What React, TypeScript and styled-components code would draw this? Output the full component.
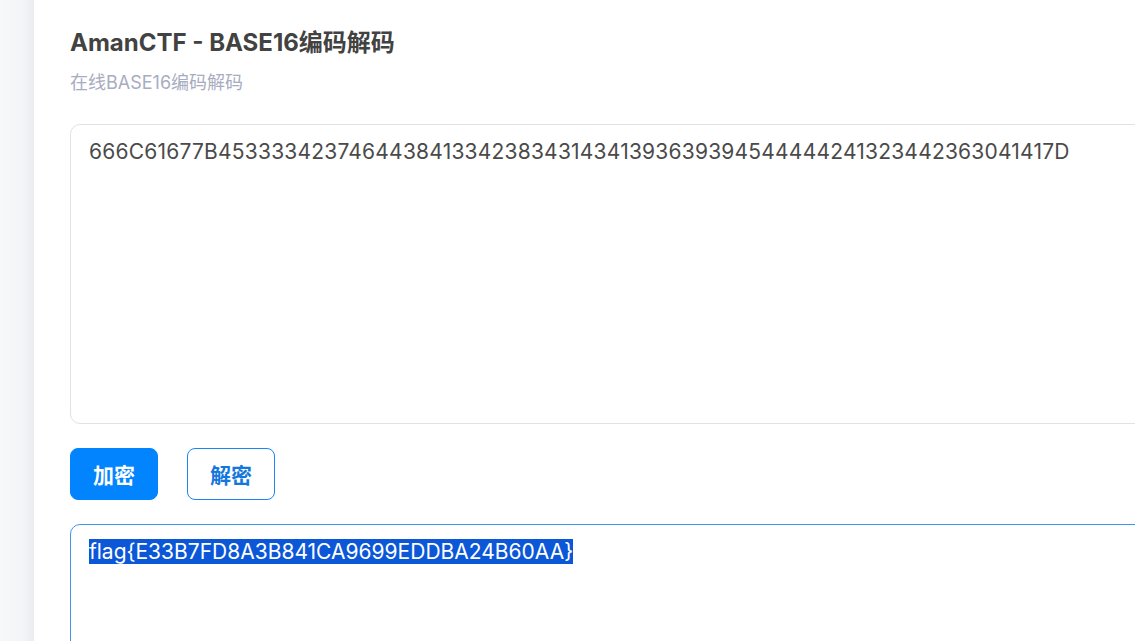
import React from "react";
import styled, { createGlobalStyle } from "styled-components";

const GlobalStyle = createGlobalStyle`
  html, body {
    margin: 0;
    padding: 0;
    height: 100%;
    overflow: hidden;
    background: #ffffff;
  }
  #root {
    height: 100%;
  }
  * {
    box-sizing: border-box;
  }
`;

const Page = styled.div`
  display: flex;
  height: 100%;
  font-family: Inter, "Noto Sans CJK SC", sans-serif;
`;

const Sidebar = styled.div`
  width: 34px;
  flex-shrink: 0;
  background: linear-gradient(to right, #f7f8fa 0%, #f3f4f7 70%, #eaecef 100%);
`;

const Card = styled.main`
  flex: 1;
  min-width: 0;
  background: #ffffff;
  padding: 28px 0 0 36px;
`;

const Title = styled.h1`
  margin: 0;
  font-size: 24px;
  line-height: 30px;
  font-weight: 700;
  color: #424242;
`;

const Subtitle = styled.p`
  margin: 13px 0 0;
  font-size: 18px;
  line-height: 24px;
  color: #a7adbf;
`;

const Box = styled.div<{ $focused?: boolean; $height: number }>`
  width: 1120px;
  height: ${(p) => p.$height}px;
  margin-top: ${(p) => (p.$focused ? 24 : 29)}px;
  border: 1px solid ${(p) => (p.$focused ? "#3d97ef" : "#e2e2e2")};
  border-radius: 10px;
  padding: 13px 18px;
  font-size: 21px;
  line-height: 27px;
  color: #4a4a4a;
  white-space: nowrap;
  letter-spacing: ${(p) => (p.$focused ? 0 : 0.21)}px;
`;

const Selected = styled.span`
  background: #0b57d8;
  color: #ffffff;
`;

const Actions = styled.div`
  display: flex;
  gap: 29px;
  margin-top: 24px;
`;

const Button = styled.button<{ $primary?: boolean }>`
  width: 88px;
  height: 52px;
  border-radius: 8px;
  font-family: Inter, "Noto Sans CJK SC", sans-serif;
  font-size: 21px;
  font-weight: 700;
  cursor: pointer;
  border: 1px solid ${(p) => (p.$primary ? "#0284ff" : "#1a86f5")};
  background: ${(p) => (p.$primary ? "#0284ff" : "#ffffff")};
  color: ${(p) => (p.$primary ? "#ffffff" : "#1477dc")};
`;

const encoded =
  "666C61677B45333342374644384133423834314341393639394544444241323442363041417D";

export default function App() {
  return (
    <>
      <GlobalStyle />
      <Page>
        <Sidebar />
        <Card>
          <Title>AmanCTF - BASE16编码解码</Title>
          <Subtitle>在线BASE16编码解码</Subtitle>
          <Box $height={300}>{encoded}</Box>
          <Actions>
            <Button $primary>加密</Button>
            <Button>解密</Button>
          </Actions>
          <Box $focused $height={300}>
            <Selected>flag{"{"}E33B7FD8A3B841CA9699EDDBA24B60AA{"}"}</Selected>
          </Box>
        </Card>
      </Page>
    </>
  );
}
